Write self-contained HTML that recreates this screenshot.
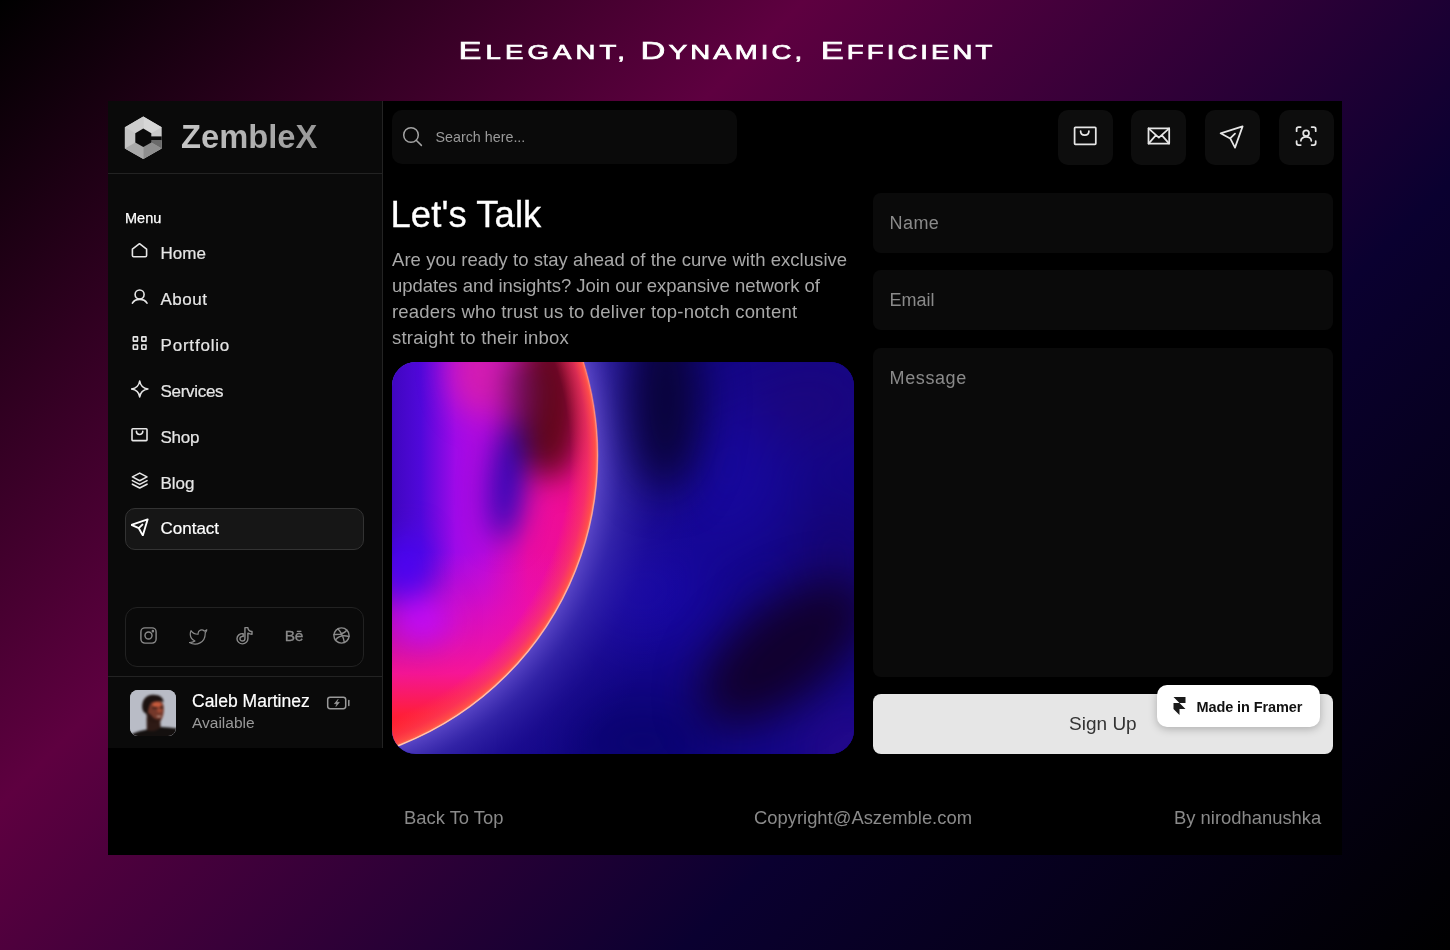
<!DOCTYPE html>
<html lang="en">
<head>
<meta charset="utf-8">
<title>ZembleX - Contact</title>
<style>
*{box-sizing:border-box;margin:0;padding:0}
html,body{width:1450px;height:950px;overflow:hidden}
body{position:relative;font-family:"Liberation Sans",sans-serif;background:#000;
background:linear-gradient(135deg,#000 0%,#5e0040 33.5%,#0a0030 68%,#000 100%);}
.abs{position:absolute}
.title{will-change:transform;left:325px;width:800px;top:31px;text-align:center;color:#fff;font-weight:normal;font-size:24.6px;letter-spacing:1.4px;line-height:40px;white-space:nowrap;-webkit-text-stroke:0.7px #fff;transform:scaleX(1.4);transform-origin:400px 0}
.title i{font-style:normal;font-size:80%;text-transform:uppercase}
.card{will-change:transform;left:108px;top:101px;width:1234px;height:754px;background:#000}
.in{left:-1px;top:-1px;width:1235px;height:755px}
.side{left:0;top:0;width:276px;height:648px;clip-path:inset(1px 0 0 1px);background:#0a0a0a;border-right:1px solid #232323}
.logo{left:0;top:0;width:275px;height:74px;border-bottom:1px solid #232323}
.brand{left:74px;top:17px;font-size:32.7px;font-weight:bold;color:transparent;background:linear-gradient(90deg,#c6c6c6 0%,#b0b0b0 50%,#989898 100%);-webkit-background-clip:text;background-clip:text;line-height:40px;letter-spacing:0}
.menu{left:18px;top:109px;color:#fff;-webkit-text-stroke:0.25px #fff;font-size:14.5px;line-height:18px}
.mi{-webkit-text-stroke:0.2px currentColor;left:18px;width:239px;height:40px;color:#e6e6e6;font-size:17px;line-height:40px;padding-left:34.5px;border-radius:10px;border:1px solid transparent}
.mi svg{position:absolute;left:5px;top:8px;width:18px;height:18px;stroke:#e6e6e6;fill:none;stroke-width:1.6;stroke-linecap:round;stroke-linejoin:round}
.mi.act{background:#161616;border-color:#333;color:#fff}
.soc{left:18px;top:507px;width:239px;height:60px;border:1px solid #222;border-radius:12px}
.soc svg{position:absolute;top:19px;width:20px;height:20px;stroke:#8a8a8a;fill:none;stroke-width:1.5;stroke-linecap:round;stroke-linejoin:round}
.be{position:absolute;left:157px;top:18px;width:22px;text-align:center;font-size:15.5px;line-height:20px;color:#8a8a8a;letter-spacing:-0.2px;-webkit-text-stroke:0.3px #8a8a8a}
.div2{left:0;top:576px;width:275px;height:1px;background:#232323}
.av{left:23px;top:590px;width:46px;height:46px;border-radius:8px;background:#b9bcc4;overflow:hidden}
.nm{-webkit-text-stroke:0.2px #fff;left:85px;top:590px;color:#fff;font-size:17.5px;line-height:22px}
.st{left:85px;top:614px;color:#9a9a9a;font-size:15.5px;line-height:18px}
.search{left:285px;top:10px;width:344.5px;height:54px;background:#0a0a0a;border-radius:10px}
.search span{position:absolute;left:43.5px;top:18px;font-size:14.3px;line-height:18px;color:#9a9a9a}
.ib{top:10px;width:55px;height:55px;background:#0d0d0d;border-radius:10px}
.ib svg{position:absolute;left:0;top:0;width:55px;height:55px;stroke:#e6e6e6;fill:none;stroke-width:1.75;stroke-linecap:round;stroke-linejoin:round}
.h1{-webkit-text-stroke:0.3px #fff;left:283.5px;top:93px;color:#fff;letter-spacing:0.1px;font-size:36.4px;line-height:44px}
.p{left:285px;top:147px;width:480px;color:#a8a8a8;font-size:18.5px;line-height:26px;white-space:nowrap}
.img{left:285px;top:262px;width:462px;height:392px;border-radius:24px;overflow:hidden;background:#1a0a90}
.inp{left:765.6px;width:460.2px;background:#0a0a0a;border-radius:8px;color:#8a8a8a;font-size:18px;padding:18px 17px;line-height:24px}
.btn{left:765.6px;top:594px;width:460.6px;height:60px;background:#e6e6e6;border-radius:8px;color:#333;font-size:19px;line-height:60px;text-align:center}
.badge{left:1050px;top:585px;width:163px;height:42px;background:#fff;border-radius:10px;box-shadow:0 2px 8px rgba(0,0,0,.25);color:#111;font-weight:bold;font-size:14.5px;line-height:44px;padding-left:39.5px;letter-spacing:-0.1px}
.ft{top:707px;color:#8a8a8a;font-size:18.4px;line-height:22px;white-space:nowrap}
</style>
</head>
<body>
<div class="abs title"><span id="tt"><span style="letter-spacing:2.93px;margin-left:2.8px">E<i>legant,</i></span> <span style="letter-spacing:2.24px">D<i>ynamic,</i></span> <span style="letter-spacing:2.2px;margin-left:2.8px">E<i>fficient</i></span></span></div>
<div class="abs card"><div class="abs in">
  <div class="abs side">
    <div class="abs logo">
<svg class="abs" style="left:17px;top:16px" width="40" height="44" viewBox="0 0 40 44">
<polygon points="19.3,0.6 37.7,11.2 37.7,32.4 19.3,43 0.9,32.4 0.9,11.2" fill="#c9c9c9"/>
<polygon points="19.3,0.6 37.7,11.2 19.3,21.8" fill="#d6d6d6"/>
<polygon points="19.3,0.6 0.9,11.2 19.3,21.8" fill="#cdcdcd"/>
<polygon points="0.9,11.2 0.9,32.4 19.3,21.8" fill="#c4c4c4"/>
<polygon points="0.9,32.4 19.3,43 19.3,21.8" fill="#a9a9a9"/>
<polygon points="19.3,43 37.7,32.4 19.3,21.8" fill="#8e8e8e"/>
<polygon points="37.7,32.4 37.7,24.2 19.3,24.2 19.3,21.8" fill="#6a6a6a"/>
<polygon points="37.7,20.4 37.7,24.2 26,24.2 26,20.4" fill="#0a0a0a"/>
<polygon points="19.3,12.6 27.3,17.2 27.3,26.4 19.3,31 11.3,26.4 11.3,17.2" fill="#0a0a0a"/>
</svg>
      <div class="abs brand">ZembleX</div>
    </div>
    <div class="abs menu">Menu</div>
    <div class="abs mi" style="top:133px"><svg viewBox="0 0 18 18"><path d="M1.4 7.2 L8.5 1.7 L15.6 7.2 V13.6 Q15.6 14.8 14.4 14.8 H2.6 Q1.4 14.8 1.4 13.6 Z"/></svg>Home</div>
    <div class="abs mi" style="top:179px"><svg viewBox="0 0 18 18"><circle cx="8.6" cy="6.5" r="4.5"/><path d="M1.4 15.2 C3 12.4 5.5 11.4 8.7 11.4 C11.9 11.4 14.4 12.4 16 15.2"/></svg><span style="letter-spacing:0.5px">About</span></div>
    <div class="abs mi" style="top:225px"><svg style="top:9px" viewBox="0 0 18 18"><rect x="2.3000000000000003" y="1.9" width="4.2" height="4.2" rx="0.4" stroke-linejoin="miter"/><rect x="10.799999999999999" y="1.9" width="4.2" height="4.2" rx="0.4" stroke-linejoin="miter"/><rect x="2.3000000000000003" y="10.0" width="4.2" height="4.2" rx="0.4" stroke-linejoin="miter"/><rect x="10.799999999999999" y="10.0" width="4.2" height="4.2" rx="0.4" stroke-linejoin="miter"/></svg><span style="letter-spacing:0.8px">Portfolio</span></div>
    <div class="abs mi" style="top:271px"><svg viewBox="0 0 18 18"><path d="M8.7 1 C9.4 5.8 11.6 8.2 16.9 9 C11.6 9.8 9.4 12.2 8.7 17 C8 12.2 5.8 9.8 0.5 9 C5.8 8.2 8 5.8 8.7 1 Z"/></svg><span style="letter-spacing:-0.3px">Services</span></div>
    <div class="abs mi" style="top:317px"><svg style="top:9px" viewBox="0 0 18 18"><rect x="1" y="1.8" width="15" height="11.8" rx="0.8"/><path d="M5.4 4.3 C5.4 8.6 11.8 8.6 11.8 4.3"/></svg><span style="letter-spacing:-0.25px">Shop</span></div>
    <div class="abs mi" style="top:363px"><svg style="top:7px" viewBox="0 0 18 18"><path d="M8.7 2.1 L16 5.9 L8.7 9.7 L1.4 5.9 Z M1.4 9.6 L8.7 13.4 L16 9.6 M1.4 13.2 L8.7 17 L16 13.2"/></svg>Blog</div>
    <div class="abs mi act" style="top:408px;height:42px;line-height:39px"><svg style="top:9px;stroke-width:1.9;stroke:#fff" viewBox="0 0 18 18"><path d="M16.6 1.4 L0.4 6.8 L7.8 10.2 L11.8 17.4 Z M7.8 10.2 L11.4 6.6"/></svg>Contact</div>
    <div class="abs soc">
<svg style="left:12.5px;top:17.5px;width:19px;height:19px" viewBox="0 0 20 20"><rect x="2" y="2" width="16" height="16" rx="4.2"/><circle cx="10" cy="10" r="3.7"/><circle cx="14.6" cy="5.4" r="0.6" fill="#8a8a8a"/></svg>
<svg style="left:62.5px;top:18.5px;width:19px;height:19px" viewBox="0 0 24 24" stroke-width="1.8"><path d="M22.5 3.6a10.9 10.9 0 0 1-3.14 1.53 4.48 4.48 0 0 0-7.86 3v1A10.66 10.66 0 0 1 2.5 4.6s-4 9 5 13a11.64 11.64 0 0 1-7 2c9 5 20 0 20-11.5a4.5 4.5 0 0 0-.08-.83A7.72 7.72 0 0 0 22.5 3.6z"/></svg>
<svg style="left:107px;top:16.5px;width:23px;height:21.5px" preserveAspectRatio="none" viewBox="0 0 24 24" stroke-width="1.6"><path d="M16.6 5.82A4.28 4.28 0 0 1 15.54 3h-3.09v12.4a2.59 2.59 0 0 1-2.59 2.5c-1.42 0-2.6-1.16-2.6-2.6 0-1.72 1.66-3.01 3.37-2.48V9.66c-3.45-.46-6.47 2.22-6.47 5.64 0 3.33 2.76 5.7 5.69 5.7 3.14 0 5.69-2.55 5.69-5.7V9.01a7.35 7.35 0 0 0 4.3 1.38V7.3s-1.88.09-3.24-1.48z"/></svg>
<span class="be">Bē</span>
<svg style="left:205.5px;top:17.5px;width:19px;height:19px" viewBox="0 0 20 20"><circle cx="10" cy="10" r="8"/><path d="M6.2 3 C9.5 6.5 11.8 11 13 17.2 M2.1 9 C7 9.2 12.5 8.2 15.6 4.4 M3.6 14.8 C6.5 10.8 12 9.4 17.9 11"/></svg>
</div>
    <div class="abs div2"></div>
    <div class="abs av"><svg width="46" height="46" viewBox="0 0 46 46" style="display:block"><defs><filter id="ab" color-interpolation-filters="sRGB" x="-20%" y="-20%" width="140%" height="140%"><feGaussianBlur stdDeviation="0.85"/></filter></defs>
<rect width="46" height="46" fill="#b9bcc6"/>
<g filter="url(#ab)">
<path d="M-2 48 L2 44 C8 41 13 40.5 17 39.5 L31 37 C36 37.2 41 37.6 48 38.5 V48 Z" fill="#14100f"/>
<path d="M16.6 27 L16.8 40 C20 42 27 41 30.6 37.4 L30.2 29 Z" fill="#2e1a15"/>
<path d="M15.4 16 C16 10 22 8.6 27 9.6 C31 10.4 33.8 13 33.8 18 C34 23 33 28.4 29.6 31.8 C26 33.6 20 31.6 17.4 27 Z" fill="#74382a"/>
<ellipse cx="27" cy="14.6" rx="4.6" ry="2.6" fill="#c45a3c"/>
<ellipse cx="29.6" cy="20" rx="2.6" ry="2.6" fill="#a04a34"/>
<path d="M16 22 C16.6 28 19 32.4 24 33 C28 33.4 30.4 31.6 31.6 28.6 C28 30.4 24 29 22 26 C20 24 18 22.6 16 22 Z" fill="#2a1712"/>
<path d="M22.5 18.4 C24 17.4 26 17.4 27.4 18.2 M29.8 18 C31 17.4 32.2 17.4 33 18" stroke="#2a1510" stroke-width="1.3" fill="none"/>
<path d="M12.4 19 C11 10.6 16 5 23 4.8 C29 4.6 33.6 7.4 33.6 12.2 C31 10.6 26 10.6 21.4 12.4 C19.4 14.6 18.4 18 17.8 24 C15 23.6 13 22 12.4 19 Z" fill="#1c1210"/>
<path d="M26.4 25.8 C28 26.6 30.4 26.4 31.4 25.2 C31 27.4 27.6 27.8 26.4 25.8 Z" fill="#f2e6dc"/>
</g></svg></div>
    <svg class="abs" style="left:218px;top:594px" width="26" height="18" viewBox="325 694 26 18" fill="none" stroke="#9a9a9a" stroke-width="1.5" stroke-linecap="round" stroke-linejoin="round"><rect x="327.7" y="697.2" width="18" height="11.5" rx="2.4"/><path d="M348.8 700.4 V705.6"/><path d="M337.9 699.6 L334.4 703.7 H336.9 L335.9 706.5 L339.4 702.3 H336.9 Z" fill="#9a9a9a" stroke-width="0.6"/></svg>
    <div class="abs nm">Caleb Martinez</div>
    <div class="abs st">Available</div>
  </div>
  <div class="abs search"><svg class="abs" style="left:0;top:0" width="55" height="55" viewBox="0 0 55 55" fill="none" stroke="#a4a4a4" stroke-width="1.5" stroke-linecap="round"><circle cx="19" cy="25" r="7.3"/><path d="M24.2 30.2 L29.4 35.4"/></svg><span>Search here...</span></div>
  <div class="abs ib" style="left:951px"><svg viewBox="0 0 55 55"><rect x="16.6" y="17.3" width="21.2" height="17" rx="0.8"/><path d="M22.6 21 C22.6 26.6 30.9 26.6 30.9 21"/></svg></div>
  <div class="abs ib" style="left:1024px"><svg viewBox="0 0 55 55"><rect x="17.5" y="18.3" width="20.7" height="15.4" rx="0.6"/><path d="M17.5 18.3 L27.85 27.6 L38.2 18.3 M17.5 33.7 L25 25.1 M38.2 33.7 L30.7 25.1"/></svg></div>
  <div class="abs ib" style="left:1098px"><svg viewBox="0 0 55 55"><path d="M37.6 16.4 L15.6 23.3 L25.2 28.4 L30 37.6 Z M25.2 28.4 L30 23.6"/></svg></div>
  <div class="abs ib" style="left:1172px"><svg viewBox="0 0 55 55"><path d="M17.6 21.2 V19.1 Q17.6 17.1 19.6 17.1 H21.7 M32.6 17.1 H34.7 Q36.7 17.1 36.7 19.1 V21.2 M36.7 31 V33.1 Q36.7 35.1 34.7 35.1 H32.6 M21.7 35.1 H19.6 Q17.6 35.1 17.6 33.1 V31"/><circle cx="27.1" cy="23.3" r="2.9"/><path d="M21.9 30.8 A5.2 3.9 0 0 1 32.3 30.8"/></svg></div>
  <div class="abs h1">Let's Talk</div>
  <div class="abs p"><span style="letter-spacing:0.05px">Are you ready to stay ahead of the curve with exclusive</span><br><span style="letter-spacing:-0.04px">updates and insights? Join our expansive network of</span><br><span style="letter-spacing:0.19px">readers who trust us to deliver top-notch content</span><br><span style="letter-spacing:0.23px">straight to their inbox</span></div>
  <div class="abs img">
<!--HERO--><svg width="462" height="392" viewBox="0 0 462 392" style="display:block">
<defs>
<filter id="b30" color-interpolation-filters="sRGB" x="-50%" y="-50%" width="200%" height="200%"><feGaussianBlur stdDeviation="30"/></filter>
<filter id="b22" color-interpolation-filters="sRGB" x="-50%" y="-50%" width="200%" height="200%"><feGaussianBlur stdDeviation="22"/></filter>
<filter id="b18" color-interpolation-filters="sRGB" x="-50%" y="-50%" width="200%" height="200%"><feGaussianBlur stdDeviation="15"/></filter>
<filter id="b1" color-interpolation-filters="sRGB" x="-5%" y="-5%" width="110%" height="110%"><feGaussianBlur stdDeviation="0.7"/></filter>
<clipPath id="sph"><circle cx="-106" cy="93" r="312"/></clipPath>
<linearGradient id="sg" x1="0" y1="0" x2="206" y2="0" gradientUnits="userSpaceOnUse">
<stop offset="0" stop-color="#4006c0"/><stop offset="0.14" stop-color="#5008da"/><stop offset="0.31" stop-color="#a00ae8"/><stop offset="0.45" stop-color="#b80ade"/><stop offset="0.66" stop-color="#ea0ca4"/><stop offset="1" stop-color="#f40e86"/>
</linearGradient>
<linearGradient id="vg" x1="0" y1="190" x2="0" y2="392" gradientUnits="userSpaceOnUse">
<stop offset="0" stop-color="#e810b8" stop-opacity="0"/><stop offset="0.3" stop-color="#f010ac" stop-opacity="0.6"/><stop offset="0.6" stop-color="#fa1692" stop-opacity="0.96"/><stop offset="0.8" stop-color="#ff1e3c" stop-opacity="1"/><stop offset="0.92" stop-color="#ff1a18"/><stop offset="1" stop-color="#ff1814"/>
</linearGradient>
<radialGradient id="rim" cx="-106" cy="93" r="312" gradientUnits="userSpaceOnUse">
<stop offset="0.91" stop-color="#ff3a50" stop-opacity="0"/><stop offset="0.965" stop-color="#fb4058" stop-opacity="0.6"/><stop offset="0.99" stop-color="#ff5048" stop-opacity="0.95"/><stop offset="1" stop-color="#ff7a5c"/>
</radialGradient>
<radialGradient id="glow" cx="-106" cy="93" r="420" gradientUnits="userSpaceOnUse">
<stop offset="0.74" stop-color="#5e4aca" stop-opacity="0.95"/><stop offset="0.80" stop-color="#4232b6" stop-opacity="0.64"/><stop offset="0.89" stop-color="#2a18a0" stop-opacity="0.3"/><stop offset="1" stop-color="#1c0c98" stop-opacity="0"/>
</radialGradient>
<linearGradient id="rs" x1="0" y1="0" x2="0" y2="392" gradientUnits="userSpaceOnUse"><stop offset="0" stop-color="#ffb0a0" stop-opacity="0.35"/><stop offset="0.35" stop-color="#ffc0a0" stop-opacity="0.7"/><stop offset="1" stop-color="#ffd0b8" stop-opacity="0.95"/></linearGradient>
</defs>
<rect width="462" height="392" fill="#130688"/>
<g filter="url(#b30)">
<ellipse cx="335" cy="110" rx="60" ry="80" fill="#17089c"/>
<ellipse cx="250" cy="230" rx="70" ry="50" fill="#1808a6"/>
<ellipse cx="420" cy="40" rx="70" ry="40" fill="#1c067c"/>
<ellipse cx="445" cy="200" rx="35" ry="70" fill="#16056e"/>
<ellipse cx="250" cy="380" rx="80" ry="45" fill="#09036e"/>
<ellipse cx="455" cy="388" rx="34" ry="36" fill="#300a8c"/>
</g>
<circle cx="-106" cy="93" r="420" fill="url(#glow)"/>
<g filter="url(#b22)">
<ellipse cx="273" cy="38" rx="36" ry="92" fill="#090338"/>
<ellipse cx="392" cy="290" rx="100" ry="48" fill="#11002e" transform="rotate(-38 392 290)"/>
</g>
<g clip-path="url(#sph)">
<rect width="462" height="392" fill="url(#sg)"/>
<rect width="462" height="392" fill="url(#vg)"/>
<g filter="url(#b18)">
<ellipse cx="87" cy="6" rx="29" ry="48" fill="#d41cb2"/>
<ellipse cx="158" cy="42" rx="33" ry="76" fill="#62061a"/>
<ellipse cx="128" cy="30" rx="14" ry="36" fill="#6a1060"/>
<ellipse cx="115" cy="118" rx="16" ry="62" fill="#1c06b6" transform="rotate(5 115 118)"/>
<ellipse cx="118" cy="108" rx="9" ry="30" fill="#1a06b4"/>
<ellipse cx="14" cy="205" rx="22" ry="34" fill="#4a04f4"/>
<ellipse cx="30" cy="258" rx="28" ry="22" fill="#c40cf8"/>
</g>
<circle cx="-106" cy="93" r="312" fill="url(#rim)"/>
</g>
<circle cx="-106" cy="93" r="311.6" fill="none" stroke="url(#rs)" stroke-width="1.5" filter="url(#b1)"/>
</svg><!--/HERO-->
</div>
  <div class="abs inp" style="top:93px;height:59.5px"><span style="letter-spacing:0.4px">Name</span></div>
  <div class="abs inp" style="top:170px;height:60px">Email</div>
  <div class="abs inp" style="top:248px;height:328.5px"><span style="letter-spacing:0.6px">Message</span></div>
  <div class="abs btn">Sign Up</div>
  <div class="abs badge"><svg class="abs" style="left:16px;top:11.5px" width="13" height="18" viewBox="0 0 12 18"><path d="M0 0h12v6H6zM0 6h6l6 6H6v6l-6-6z" fill="#1a1a1a"/></svg>Made in Framer</div>
  <div class="abs ft" style="left:297px">Back To Top</div>
  <div class="abs ft" style="left:647px">Copyright@Aszemble.com</div>
  <div class="abs ft" style="left:1067px">By nirodhanushka</div>
</div></div>
</body>
</html>
